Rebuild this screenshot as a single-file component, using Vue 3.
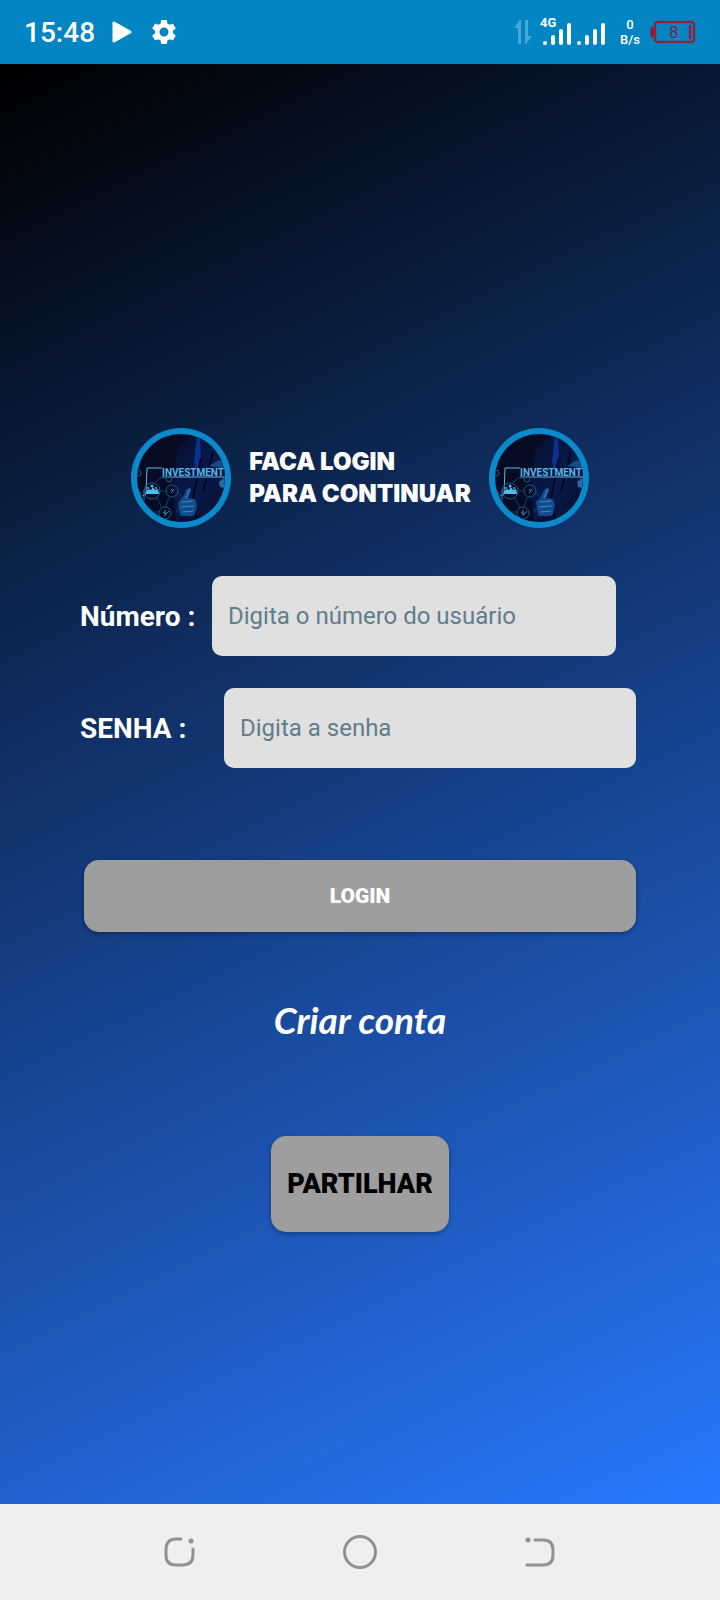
<template>
  <div class="screen">
    <header class="status-bar">
      <div class="status-left">
        <span class="clock">15:48</span>
        <svg width="22" height="24" viewBox="0 0 22 24">
          <path d="M3 3v18L19 12z" fill="#fff" stroke="#fff" stroke-width="3" stroke-linejoin="round" />
        </svg>
        <svg width="30" height="30" viewBox="0 0 24 24">
          <path :d="gearPath" fill="#fff" />
        </svg>
      </div>
      <div class="status-right">
        <svg width="18" height="26" viewBox="0 0 18 26" fill="#4aa8d8">
          <path d="M0 9 6 1h1v24H4V9zM11 1h3v16h4l-6 8h-1z" />
        </svg>
        <svg class="signal" width="66" height="30" viewBox="0 0 66 30">
          <text x="0" y="11" class="network">4G</text>
          <g stroke="#fff" stroke-width="4" stroke-linecap="round">
            <path
              v-for="bar in bars"
              :key="bar.x"
              :d="`M${bar.x} 27V${bar.top}`"
            />
          </g>
        </svg>
        <div class="speed"><span>0</span><span>B/s</span></div>
        <svg width="46" height="24" viewBox="0 0 46 24">
          <rect x="5" y="2" width="39" height="20" rx="3" fill="none" stroke="#8a2240" stroke-width="2.5" />
          <path d="M2 8v8" stroke="#a30f22" stroke-width="3" stroke-linecap="round" />
          <path d="M40 5v14" stroke="#8a2240" stroke-width="2.5" />
          <text x="24" y="18" text-anchor="middle" class="level">8</text>
        </svg>
      </div>
    </header>

    <main class="content">
      <div class="brand">
        <svg class="avatar" viewBox="0 0 100 100" aria-hidden="true">
          <use href="#investment" />
        </svg>
        <h1 class="title">FACA LOGIN<br />PARA CONTINUAR</h1>
        <svg class="avatar" viewBox="0 0 100 100" aria-hidden="true">
          <defs>
            <clipPath id="disc"><circle cx="50" cy="50" r="44" /></clipPath>
            <linearGradient id="suit" x1="0" y1="0" x2="1" y2="1">
              <stop offset="0" stop-color="#060f30" />
              <stop offset="0.5" stop-color="#08194a" />
              <stop offset="1" stop-color="#040a24" />
            </linearGradient>
            <g id="investment">
              <circle cx="50" cy="50" r="50" fill="#0a8acb" />
              <g clip-path="url(#disc)">
                <rect width="100" height="100" fill="#040b23" />
                <path d="M58 10 46 22 42 60 46 100h54V20L76 8z" fill="url(#suit)" />
                <path d="M66 8 63 34 66 44 70 28 69 10z" fill="#0b3190" />
                <path d="M70 30 62 70 66 92M82 24 72 64" fill="none" stroke="#02081f" stroke-width="2" />
                <path d="M11 68 15 66 16 40h15M31 49h64" fill="none" stroke="#58b8ea" stroke-width="1" />
                <path d="M9 74v-10M13 72V62" stroke="#2b7fb5" stroke-width="1" />
                <g fill="none" stroke="#1b5c8a" stroke-width="1">
                  <circle cx="21" cy="63" r="8" />
                  <circle cx="41" cy="63" r="6" />
                  <circle cx="34" cy="85" r="6" />
                  <circle cx="38" cy="51" r="3" />
                  <circle cx="7" cy="45" r="3" />
                  <path d="M29 63h6M26 70l5 10M38 69l-3 10M24 55l5-5h6M14 70l-4 6 6 8h12M47 64l6 8-8 12" stroke="#123f6b" />
                </g>
                <path d="M15 66v-3l3-2 2 1 2-3 2 3 3-1 1 5z" fill="#4dbdf0" />
                <g fill="#4dbdf0">
                  <circle cx="17" cy="60" r="1" />
                  <circle cx="21" cy="58" r="1.5" />
                  <circle cx="25" cy="60" r="1" />
                </g>
                <path d="M40 65l3-4M40 61l2 2M32 84l3 2 3-3M34 82v6" stroke="#3d94c4" stroke-width="1" />
                <path d="M47 74 52 69 55 62 59 59 60 63 57 70 64 71 66 77 64 86 58 91 49 87z" fill="#134a8c" />
                <path d="M51 74l11-1M50 79l13-1M52 84l10-1M55 70l4-9" fill="none" stroke="#3c8fcb" stroke-width="1" />
                <path d="M48 88h16l4 12H46z" fill="#05133a" />
                <path d="M88 54 93 50 98 54v12l-6-2 2-4-5-1z" fill="#2b6ba5" />
                <path d="M78 38 88 32 98 37 96 41 86 39z" fill="#174d86" />
                <text x="31" y="48" class="art-text">INVESTMENT</text>
              </g>
            </g>
          </defs>
          <use href="#investment" />
        </svg>
      </div>

      <form class="form" @submit.prevent>
        <div class="field">
          <label for="numero">Número :</label>
          <input id="numero" v-model="numero" type="text" placeholder="Digita o número do usuário" />
        </div>
        <div class="field field-senha">
          <label for="senha">SENHA :</label>
          <input id="senha" v-model="senha" type="password" placeholder="Digita a senha" />
        </div>
        <button class="login" type="submit">LOGIN</button>
      </form>

      <a class="create" href="#">Criar conta</a>
      <button class="share" type="button">PARTILHAR</button>
    </main>

    <nav class="nav-bar">
      <button type="button" aria-label="Recentes">
        <svg viewBox="0 0 36 36">
          <path d="M19 5h-5Q4 5 4 16v5q0 10 10 10h6q11 0 11-10v-6" />
          <circle class="point" cx="29" cy="7" r="2.5" />
        </svg>
      </button>
      <button type="button" aria-label="Início">
        <svg viewBox="0 0 36 36"><circle cx="18" cy="18" r="15.5" /></svg>
      </button>
      <button type="button" aria-label="Voltar">
        <svg viewBox="0 0 36 36">
          <path d="M13 6h8q10 0 10 10v5q0 10-10 10H5" />
          <circle class="point" cx="6" cy="6" r="2.5" />
        </svg>
      </button>
    </nav>
  </div>
</template>

<script setup>
import { ref } from 'vue';

const numero = ref('');
const senha = ref('');

const bars = [
  { x: 5, top: 27 },
  { x: 13, top: 21 },
  { x: 21, top: 15 },
  { x: 29, top: 9 },
  { x: 39, top: 27 },
  { x: 47, top: 21 },
  { x: 55, top: 15 },
  { x: 63, top: 9 },
];

const gearPath =
  'M19.14 12.94c.04-.3.06-.61.06-.94 0-.32-.02-.64-.07-.94l2.03-1.58c.18-.14.23-.41.12-.61l-1.92-3.32c-.12-.22-.37-.29-.59-.22l-2.39.96c-.5-.38-1.03-.7-1.62-.94l-.36-2.54c-.04-.24-.24-.41-.48-.41h-3.84c-.24 0-.43.17-.47.41l-.36 2.54c-.59.24-1.13.57-1.62.94l-2.39-.96c-.22-.08-.47 0-.59.22L2.74 8.87c-.12.21-.08.47.12.61l2.03 1.58c-.05.3-.09.63-.09.94s.02.64.07.94l-2.03 1.58c-.18.14-.23.41-.12.61l1.92 3.32c.12.22.37.29.59.22l2.39-.96c.5.38 1.03.7 1.62.94l.36 2.54c.05.24.24.41.48.41h3.84c.24 0 .44-.17.47-.41l.36-2.54c.59-.24 1.13-.56 1.62-.94l2.39.96c.22.08.47 0 .59-.22l1.92-3.32c.12-.22.07-.47-.12-.61l-2.01-1.58zM12 15.6c-1.98 0-3.6-1.62-3.6-3.6s1.62-3.6 3.6-3.6 3.6 1.62 3.6 3.6-1.62 3.6-3.6 3.6z';
</script>

<style>
body {
  margin: 0;
}
</style>

<style scoped>
.screen {
  display: flex;
  flex-direction: column;
  min-height: 100vh;
  font-family: Roboto, 'Liberation Sans', sans-serif;
  color: #fff;
}

.status-bar {
  display: flex;
  align-items: center;
  justify-content: space-between;
  height: 64px;
  padding: 0 24px;
  background: #0485c3;
}

.status-left,
.status-right {
  display: flex;
  align-items: center;
}

.status-left {
  gap: 16px;
}

.clock {
  font-size: 28px;
  font-weight: 500;
}

.status-right {
  gap: 10px;
}

.signal {
  margin: 0 4px 2px -2px;
}

.network {
  font-size: 13px;
  font-weight: 700;
  fill: #fff;
}

.speed {
  display: flex;
  flex-direction: column;
  align-items: center;
  font-size: 13px;
  font-weight: 500;
  line-height: 15px;
}

.level {
  font-size: 17px;
  fill: #8a2240;
}

.content {
  flex: 1;
  display: flex;
  flex-direction: column;
  align-items: center;
  justify-content: center;
  padding-top: 92px;
  background: linear-gradient(154deg, #000, #2979ff);
}

.brand {
  display: flex;
  align-items: center;
  gap: 18px;
}

.avatar {
  width: 100px;
  height: 100px;
}

.art-text {
  font-size: 10px;
  font-weight: 700;
  fill: #5cb4e4;
}

.title {
  margin: 0;
  font-family: Inter, sans-serif;
  font-size: 24px;
  font-weight: 900;
  line-height: 32px;
  white-space: nowrap;
}

.form {
  display: flex;
  flex-direction: column;
  align-self: stretch;
  gap: 32px;
  margin-top: 48px;
  padding: 0 84px 0 80px;
}

.field {
  display: flex;
  align-items: center;
  gap: 16px;
  padding-right: 20px;
}

.field label {
  flex: 0 0 116px;
  font-size: 28px;
  font-weight: 700;
  white-space: nowrap;
}

.field-senha {
  padding-right: 0;
}

.field-senha label {
  flex-basis: 128px;
}

.field input {
  flex: 1;
  min-width: 0;
  height: 80px;
  box-sizing: border-box;
  padding: 0 16px;
  border: none;
  border-radius: 10px;
  background: #e0e0e0;
  color: #000;
  font-family: inherit;
  font-size: 24px;
}

.field input::placeholder {
  color: #607d8b;
  opacity: 1;
}

.login,
.share {
  border: none;
  background: #9e9e9e;
  box-shadow: 0 2px 5px rgba(0, 0, 0, 0.3);
  font-family: Roboto, sans-serif;
  font-weight: 900;
  cursor: pointer;
}

.login {
  height: 72px;
  margin: 60px 0 0 4px;
  border-radius: 15px;
  color: #fff;
  font-size: 21px;
}

.create {
  margin-top: 64px;
  color: #fff;
  font-family: Lato, sans-serif;
  font-size: 37px;
  font-style: italic;
  font-weight: 700;
  line-height: 48px;
  text-decoration: none;
}

.share {
  height: 96px;
  margin-top: 92px;
  padding: 0 16px;
  border-radius: 15px;
  color: #000;
  font-size: 27px;
}

.nav-bar {
  display: flex;
  justify-content: space-around;
  align-items: center;
  height: 96px;
  padding: 0 12.5%;
  background: #efefef;
}

.nav-bar button {
  padding: 0;
  border: none;
  background: none;
}

.nav-bar svg {
  display: block;
  width: 36px;
  height: 36px;
  fill: none;
  stroke: #919191;
  stroke-width: 3;
  stroke-linecap: round;
}

.nav-bar .point {
  fill: #919191;
  stroke: none;
}
</style>
